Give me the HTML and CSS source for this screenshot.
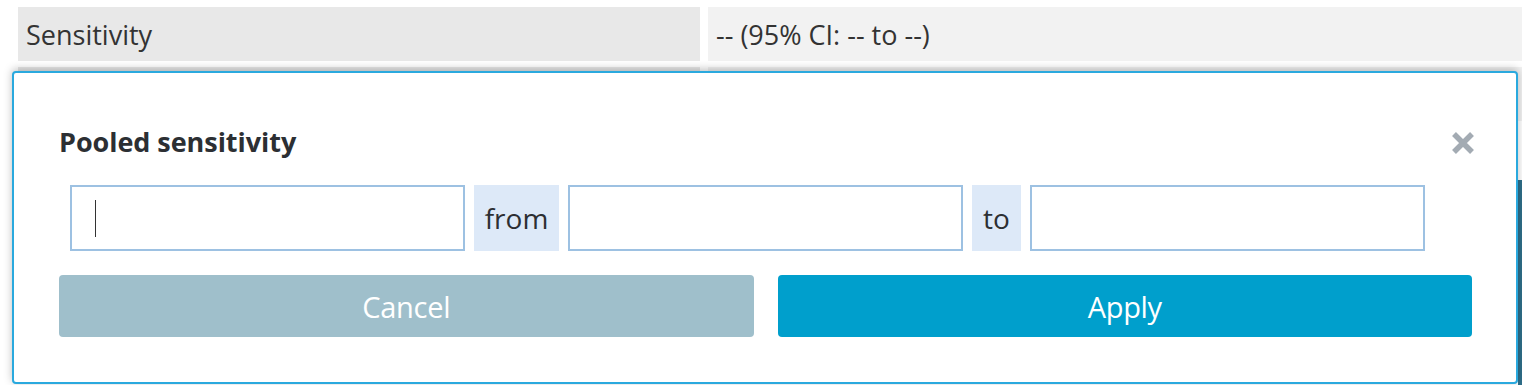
FILE: index.html
```html
<!DOCTYPE html>
<html lang="en">
<head>
    <meta charset="UTF-8">
    <meta name="viewport" content="width=device-width, initial-scale=1.0">
    <title>Pooled sensitivity</title>
    <link rel="stylesheet" href="styles.css">
</head>
<body>

    <div class="results">
        <div class="row">
            <div class="cell label">Sensitivity</div>
            <div class="cell value">-- (95% CI: -- to --)</div>
        </div>
        <div class="row">
            <div class="cell label">&nbsp;</div>
            <div class="cell value">&nbsp;</div>
        </div>
    </div>
    <div class="side-strip"></div>

    <div class="modal" id="modal">
        <div class="modal-header">
            <h2>Pooled sensitivity</h2>
            <button class="close" id="close" aria-label="Close">
                <svg width="26" height="26" viewBox="0 0 26 26">
                    <path d="M4 4 L22 22 M22 4 L4 22" stroke="#a3abb3" stroke-width="5.5"/>
                </svg>
            </button>
        </div>
        <div class="range">
            <input type="text" class="field focused" id="estimate">
            <span class="addon addon-from">from</span>
            <input type="text" class="field" id="lower">
            <span class="addon addon-to">to</span>
            <input type="text" class="field" id="upper">
        </div>
        <div class="actions">
            <button class="btn cancel" id="cancel">Cancel</button>
            <button class="btn apply" id="apply">Apply</button>
        </div>
    </div>

    <script>
        const modal = document.getElementById('modal');
        const estimate = document.getElementById('estimate');

        // Drop the fake caret once the user types
        estimate.addEventListener('input', () => estimate.classList.remove('focused'));

        // Close the modal
        function closeModal() {
            modal.style.display = 'none';
        }

        document.getElementById('close').addEventListener('click', closeModal);
        document.getElementById('cancel').addEventListener('click', closeModal);
        document.getElementById('apply').addEventListener('click', closeModal);
    </script>
</body>
</html>
```

FILE: styles.css
```css
* {
    margin: 0;
    padding: 0;
    box-sizing: border-box;
}

body {
    background-color: #fff;
    font-family: "Open Sans", "Noto Sans", sans-serif;
    color: #333;
    overflow: hidden;
    height: 385px;
}

.results {
    padding: 7px 0 0 18px;
}

.row {
    display: flex;
    gap: 8px;
    height: 54px;
    margin-bottom: 6px;
}

.cell {
    display: flex;
    align-items: center;
    padding-left: 8px;
    font-size: 27px;
    color: #333;
}

.label {
    width: 682px;
    background-color: #e8e8e8;
}

.value {
    flex: 1;
    background-color: #f2f2f2;
}

.side-strip {
    position: absolute;
    right: 0;
    top: 180px;
    width: 4px;
    height: 205px;
    background-color: #2f6f8a;
}

.modal {
    position: absolute;
    top: 71px;
    left: 12px;
    width: 1506px;
    height: 313px;
    background-color: #fff;
    border: 2px solid #2aa9de;
    border-radius: 4px;
    box-shadow: 0 -2px 8px rgba(0, 0, 0, 0.25);
    padding: 0 45px;
}

.modal-header {
    display: flex;
    justify-content: space-between;
    align-items: center;
    height: 112px;
    padding-top: 24px;
}

.modal-header h2 {
    font-size: 27px;
    font-weight: 700;
    letter-spacing: -0.05px;
    color: #2c2f33;
}

.close {
    border: none;
    background: none;
    cursor: pointer;
    margin-top: 4px;
    margin-right: -5px;
    display: flex;
}

.range {
    display: flex;
    gap: 9px;
    height: 66px;
    padding-left: 11px;
    width: 1376px;
}

.field {
    width: 395px;
    height: 66px;
    border: 2px solid #9dc1e2;
    background-color: #fff;
    outline: none;
    font-family: inherit;
    font-size: 26px;
    padding-left: 24px;
}

.field.focused {
    background-image: linear-gradient(#333, #333);
    background-size: 1px 37px;
    background-position: 23px 13px;
    background-repeat: no-repeat;
}

.addon {
    display: flex;
    align-items: center;
    justify-content: center;
    flex-shrink: 0;
    background-color: #dde9f8;
    font-size: 28px;
    color: #2c2f33;
}

.addon-from {
    width: 85px;
}

.addon-to {
    width: 49px;
}

.actions {
    display: flex;
    gap: 24px;
    margin-top: 24px;
    width: 1413px;
}

.btn {
    flex: 1;
    height: 62px;
    border: none;
    border-radius: 4px;
    color: #fff;
    font-family: inherit;
    font-size: 29px;
    letter-spacing: -0.3px;
    cursor: pointer;
}

.cancel {
    background-color: #9fbfcb;
}

.apply {
    background-color: #009fcc;
}
```
